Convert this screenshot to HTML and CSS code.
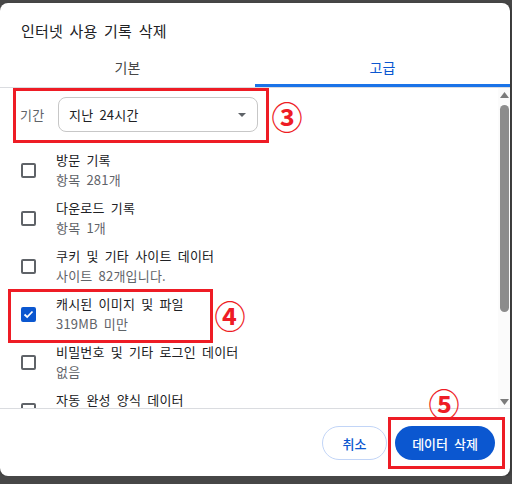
FILE: index.html
```html
<!doctype html>
<html>
<head>
  <meta charset="utf-8">
  <title>인터넷 사용 기록 삭제</title>
  <link rel="stylesheet" href="styles.css">
</head>
<body>
  <div class="dialog">
    <h1 class="title">인터넷 사용 기록 삭제</h1>

    <nav class="tabs">
      <div class="tab">기본</div>
      <div class="tab active">고급</div>
    </nav>

    <div class="content">
      <div class="list">
        <div class="period">
          <span class="period-label">기간</span>
          <div class="select">
            <span>지난 24시간</span>
            <svg class="caret" width="8" height="4" viewBox="0 0 8 4"><polygon points="0,0 8,0 4,4" fill="#5f6368"/></svg>
          </div>
        </div>

        <div class="item">
          <span class="box"></span>
          <div>
            <div class="item-name">방문 기록</div>
            <div class="item-sub">항목 281개</div>
          </div>
        </div>
        <div class="item">
          <span class="box"></span>
          <div>
            <div class="item-name">다운로드 기록</div>
            <div class="item-sub">항목 1개</div>
          </div>
        </div>
        <div class="item">
          <span class="box"></span>
          <div>
            <div class="item-name">쿠키 및 기타 사이트 데이터</div>
            <div class="item-sub">사이트 82개입니다.</div>
          </div>
        </div>
        <div class="item">
          <span class="box checked">
            <svg width="11" height="9" viewBox="0 0 11 9"><polyline points="1.5,4.5 4.2,7 9.5,1.5" fill="none" stroke="#fff" stroke-width="1.8"/></svg>
          </span>
          <div>
            <div class="item-name">캐시된 이미지 및 파일</div>
            <div class="item-sub">319MB 미만</div>
          </div>
        </div>
        <div class="item">
          <span class="box"></span>
          <div>
            <div class="item-name">비밀번호 및 기타 로그인 데이터</div>
            <div class="item-sub">없음</div>
          </div>
        </div>
        <div class="item">
          <span class="box"></span>
          <div>
            <div class="item-name">자동 완성 양식 데이터</div>
          </div>
        </div>
      </div>

      <!-- drawn scrollbar, the list is clipped -->
      <div class="scrollbar">
        <svg width="9" height="6" viewBox="0 0 9 6"><polygon points="0,6 9,6 4.5,0" fill="#7b7b7b"/></svg>
        <div class="thumb"></div>
        <svg class="down" width="9" height="6" viewBox="0 0 9 6"><polygon points="0,0 9,0 4.5,6" fill="#7b7b7b"/></svg>
      </div>
    </div>

    <footer class="footer">
      <button class="btn btn-outline">취소</button>
      <button class="btn btn-primary">데이터 삭제</button>
    </footer>

    <!-- annotation marks over the dialog -->
    <div class="mark mark-period"></div>
    <div class="mark mark-cache"></div>
    <div class="mark mark-delete"></div>
    <span class="num num-3">③</span>
    <span class="num num-4">④</span>
    <span class="num num-5">⑤</span>
  </div>
</body>
</html>
```

FILE: styles.css
```css
* {
  box-sizing: border-box;
  margin: 0;
  padding: 0;
}

body {
  background: #474747;
  padding-top: 3px;
  font-family: "Noto Sans CJK KR", "Noto Sans", sans-serif;
  font-size: 13px;
  color: #202124;
  word-spacing: 3px;
  letter-spacing: 0.2px;
}

.dialog {
  position: relative;
  width: 510px;
  height: 473px;
  background: #fff;
  border-radius: 8px;
  box-shadow: 1px 1px 3px rgba(0, 0, 0, 0.3);
  display: flex;
  flex-direction: column;
}

.title {
  font-size: 15px;
  font-weight: 400;
  line-height: 20px;
  padding: 18px 21px 8px;
  height: 46px;
}

.tabs {
  display: flex;
  border-bottom: 1px solid #dadce0;
}

.tab {
  flex: 1;
  height: 38px;
  display: flex;
  align-items: center;
  justify-content: center;
  font-size: 14px;
  color: #474747;
  border-bottom: 3px solid transparent;
}

.tab.active {
  color: #0b57d0;
  border-bottom-color: #1a73e8;
}

.content {
  height: 320px;
  display: flex;
  overflow: hidden;
}

.list {
  flex: 1;
  overflow: hidden;
}

.period {
  height: 58px;
  display: flex;
  align-items: flex-start;
  padding: 9px 0 0 20px;
}

.period-label {
  width: 38px;
  line-height: 35px;
  color: #5f6368;
}

.select {
  width: 200px;
  height: 35px;
  border: 1px solid #c7c7c7;
  border-radius: 8px;
  display: flex;
  align-items: center;
  justify-content: space-between;
  padding: 0 11px 0 10px;
}

.item {
  height: 48px;
  display: flex;
  align-items: flex-start;
  padding: 4px 0 0 21px;
  line-height: 20px;
}

.box {
  width: 15px;
  height: 15px;
  margin-top: 13px;
  border: 2px solid #5f6368;
  border-radius: 2px;
  margin-right: 20px;
  display: flex;
  align-items: center;
  justify-content: center;
}

.box.checked {
  background: #0b57d0;
  border-color: #0b57d0;
}

.item-sub {
  color: #5f6368;
}

.scrollbar {
  width: 12px;
  background: #fbfbfb;
  display: flex;
  flex-direction: column;
  align-items: center;
  padding: 4px 0 3px;
}

.thumb {
  width: 9px;
  height: 207px;
  margin-top: 7px;
  background: #8c8c8c;
  border-radius: 5px;
}

.scrollbar .down {
  margin-top: auto;
}

.footer {
  flex: 1;
  border-top: 1px solid #dadce0;
  display: flex;
  justify-content: flex-end;
  align-items: flex-start;
  gap: 8px;
  padding: 17px 15px 0 0;
}

.btn {
  height: 34px;
  border-radius: 17px;
  font-family: inherit;
  font-size: 13px;
  font-weight: 500;
  word-spacing: 3px;
}

.btn-outline {
  width: 65px;
  background: #fff;
  border: 1px solid #c2d5f7;
  color: #0b57d0;
}

.btn-primary {
  width: 100px;
  background: #0b57d0;
  border: none;
  color: #fff;
}

.mark {
  position: absolute;
  border: 3px solid #ee1c25;
}

.mark-period { left: 13px; top: 85px; width: 256px; height: 55px; }
.mark-cache { left: 8px; top: 286px; width: 205px; height: 54px; }
.mark-delete { left: 388px; top: 414px; width: 117px; height: 52px; }

.num {
  position: absolute;
  width: 34px;
  height: 34px;
  display: flex;
  align-items: center;
  justify-content: center;
  color: #ee1c25;
  font-size: 31px;
  font-weight: 700;
  line-height: 1;
  letter-spacing: 0;
}

.num-3 { left: 270px; top: 95px; }
.num-4 { left: 213px; top: 294px; }
.num-5 { left: 427px; top: 382px; }
```
